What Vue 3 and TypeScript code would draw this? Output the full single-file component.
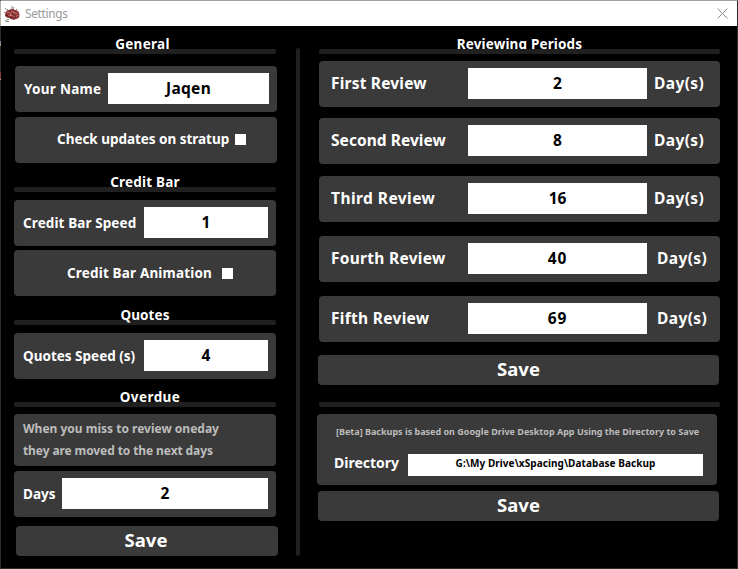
<script setup lang="ts">
import { reactive, ref } from 'vue'

interface Period {
  label: string
  days: string
  track: string
  numTrack: string
  wide: boolean
}

const userName = ref('Jaqen')
const barSpeed = ref('1')
const quoteSpeed = ref('4')
const overdueDays = ref('2')
const directory = ref('G:\\My Drive\\xSpacing\\Database Backup')

const periods = reactive<Period[]>([
  { label: 'First Review', days: '2', track: '0.2px', numTrack: '0', wide: false },
  { label: 'Second Review', days: '8', track: '0.05px', numTrack: '0', wide: false },
  { label: 'Third Review', days: '16', track: '0.45px', numTrack: '0', wide: false },
  { label: 'Fourth Review', days: '40', track: '0.28px', numTrack: '1px', wide: true },
  { label: 'Fifth Review', days: '69', track: '0.3px', numTrack: '1px', wide: true },
])
</script>

<template>
  <div class="window">
    <header class="titlebar">
      <svg class="logo" viewBox="0 0 16 16" width="16" height="16">
        <path d="M1 2.500l3 1.500M8 0v3M10 1l-1 2M13 3l-1 1M0 6l2 1M1 15l4-2M2 15.500h3" stroke="#8b8b8b" stroke-width="1" fill="none" />
        <path d="M1 9C1 6 3 4 5 4c2-1.500 5-1.500 6 0 3 0 4.500 2.500 4.500 5 0 3-2 4-4 4-1 1.500-2 1-3 .5-2 0-2-1-3-1.500C3 12 1 11 1 9z" fill="#8e3538" />
        <path d="M3 7c2-2 3 1 5-2M9 5c0 3 3 1 4 3M4 10c2-2 4 1 6-1M10 11c1-1 3 0 4-2M6 7l1 2" stroke="#d98683" stroke-width=".9" fill="none" />
        <path d="M2 9l3 1.500M8 8l3 2M5 5l2 1M11 12l1-2M6 12l2-1" stroke="#42191d" stroke-width=".9" fill="none" />
      </svg>
      <span class="title">Settings</span>
      <svg class="close" viewBox="0 0 11 11" width="11" height="11">
        <path d="M.5.5l10 10M10.500.5l-10 10" stroke="#8c8c8c" stroke-width="1" fill="none" />
      </svg>
    </header>

    <main class="body">
      <section class="left">
        <h2 class="heading general">General</h2>
        <div class="rule"></div>
        <div class="card name-card">
          <label class="name-label">Your Name</label>
          <input v-model="userName" class="field name-field" />
        </div>
        <div class="card check updates">
          <span>Check updates on stratup</span><i class="box"></i>
        </div>

        <h2 class="heading credit">Credit Bar</h2>
        <div class="rule"></div>
        <div class="card speed">
          <label class="speed-label">Credit Bar Speed</label>
          <input v-model="barSpeed" class="field" />
        </div>
        <div class="card check animation">
          <span>Credit Bar Animation</span><i class="box"></i>
        </div>

        <h2 class="heading quotes">Quotes</h2>
        <div class="rule under"></div>
        <div class="card speed">
          <label>Quotes Speed (s)</label>
          <input v-model="quoteSpeed" class="field" />
        </div>

        <h2 class="heading overdue">Overdue</h2>
        <div class="rule"></div>
        <div class="card note">
          <p>When you miss to review oneday</p>
          <p class="second">they are moved to the next days</p>
        </div>
        <div class="card days">
          <label>Days</label>
          <input v-model="overdueDays" class="field" />
        </div>
        <button class="save">Save</button>
      </section>

      <div class="divider"></div>

      <section class="right">
        <h2 class="heading reviewing">Reviewing Periods</h2>
        <div class="rule"></div>
        <div class="periods">
          <div v-for="p in periods" :key="p.label" class="card period" :class="{ wide: p.wide }">
            <label :style="{ letterSpacing: p.track }">{{ p.label }}</label>
            <input v-model="p.days" class="field" :style="{ letterSpacing: p.numTrack }" />
            <span class="unit">Day(s)</span>
          </div>
        </div>
        <button class="save">Save</button>
        <div class="rule backup-rule"></div>
        <div class="card backup">
          <p class="hint">[Beta] Backups is based on Google Drive Desktop App Using the Directory to Save</p>
          <div class="dir">
            <label>Directory</label>
            <input v-model="directory" class="field dir-field" />
          </div>
        </div>
        <button class="save last">Save</button>
      </section>
    </main>
  </div>
</template>

<style>
body {
  background: #000;
}
</style>

<style scoped>
* {
  box-sizing: border-box;
}
.window {
  width: 738px;
  height: 569px;
  overflow: hidden;
  border: 1px solid #2b2b2b;
  border-top-color: #a2a1a2;
  border-left-color: transparent;
  background:
    linear-gradient(#b5b0a8 0 26px, #2b2b2b 26px 41px, #6b8ca8 41px 44px, #a59a80 44px 46px, #2b2b2b 46px 72px, #8a3a3a 72px 79px, #b0b0b0 79px 80px, #2b2b2b 80px) 0 0 / 1px 100% no-repeat border-box,
    #000;
  color: #fff;
  font: 700 13.5px/17px 'Noto Sans', sans-serif;
}
.titlebar {
  display: flex;
  align-items: center;
  height: 25px;
  padding: 0 9px 0 3px;
  background: #fff;
}
.title {
  flex: 1;
  margin-left: 5px;
  color: #999;
  font-weight: 400;
  font-size: 11.8px;
  letter-spacing: -0.3px;
}
.body {
  display: flex;
  padding: 9px 0 0 13px;
}
.left {
  width: 262px;
}
.heading {
  height: 14px;
  margin: 0;
  font-size: 13.5px;
  line-height: 19px;
  text-align: center;
}
.general {
  padding-right: 5px;
  letter-spacing: 0.3px;
}
.credit {
  margin-top: 10px;
  letter-spacing: 0.2px;
}
.quotes {
  position: relative;
  z-index: 1;
  margin-top: 10px;
  letter-spacing: 0.1px;
}
.overdue {
  margin-top: 9px;
  padding-left: 10px;
  letter-spacing: 0.45px;
}
.rule {
  position: relative;
  height: 5px;
  border-radius: 2px;
  background: #202020;
}
.card {
  display: flex;
  align-items: center;
  height: 46px;
  border-radius: 4px;
  background: #3a3a3a;
}
.field {
  height: 31px;
  min-width: 0;
  margin: 0;
  padding: 0 0 1px;
  border: 0;
  border-radius: 0;
  outline: 0;
  background: #fff;
  color: #000;
  font: 700 15.5px 'Noto Sans', sans-serif;
  text-align: center;
}
.name-card {
  width: 262px;
  margin: 12px 0 0 1px;
  padding: 0 8px 1px 9px;
}
.name-label {
  width: 84px;
  padding-top: 2px;
  letter-spacing: 0.28px;
}
.name-field {
  flex: 1;
  letter-spacing: 0.3px;
}
.updates {
  width: 262px;
  margin: 5px 0 0 1px;
  padding: 0 0 1px 42px;
  letter-spacing: -0.03px;
}
.updates .box {
  margin-left: 6px;
}
.box {
  width: 11px;
  height: 11px;
  background: #fff;
}
.speed {
  margin-top: 8px;
  padding: 0 8px 1px 9px;
}
.speed label {
  width: 121px;
  padding-top: 2px;
}
.speed .speed-label {
  letter-spacing: 0.1px;
}
.speed .field,
.days .field {
  flex: 1;
}
.animation {
  margin-top: 4px;
  padding-left: 53px;
  letter-spacing: 0.17px;
}
.animation .box {
  margin-left: 10px;
}
.note {
  flex-direction: column;
  align-items: flex-start;
  height: 52px;
  margin-top: 7px;
  padding: 4px 9px;
  color: #bdbdbd;
  font-size: 12px;
  line-height: 22px;
}
.note p {
  margin: 0;
}
.note .second {
  letter-spacing: -0.1px;
}
.days {
  margin-top: 5px;
  padding: 0 8px 1px 9px;
}
.days label {
  width: 39px;
  padding-top: 2px;
}
.save {
  display: block;
  width: 401px;
  height: 30px;
  margin: 0;
  padding: 0 0 3px;
  border: 0;
  border-radius: 4px;
  background: #3a3a3a;
  color: #fff;
  font: 700 18.5px/27px 'Noto Sans', sans-serif;
}
.left .save {
  width: 262px;
  margin: 9px 0 0 2px;
  padding-right: 2px;
}
.divider {
  width: 4px;
  height: 508px;
  margin: 13px 19px 0 20px;
  border-radius: 2px;
  background: #202020;
}
.right {
  width: 401px;
}
.reviewing {
  letter-spacing: 0.15px;
}
.periods {
  display: grid;
  grid-template-rows: 57px 58px 60px 60px 46px;
  margin-top: 7px;
}
.period {
  padding: 0 0 1px 12px;
  font-size: 15.5px;
}
.period label {
  width: 137px;
  padding-bottom: 1px;
}
.period .field {
  width: 179px;
}
.unit {
  margin-left: 7px;
  padding-bottom: 1px;
  letter-spacing: 0.4px;
}
.wide .unit {
  margin-left: 10px;
}
.right .save {
  margin: 13px 0 0 -1px;
}
.backup-rule {
  margin-top: 17px;
}
.backup {
  flex-direction: column;
  align-items: stretch;
  width: 400px;
  height: 71px;
  margin: 7px 0 0 -2px;
  padding: 9px 14px 0 17px;
}
.hint {
  height: 31px;
  margin: 0;
  padding-left: 2px;
  color: #bdbdbd;
  font-size: 9px;
  line-height: 18px;
  white-space: nowrap;
}
.dir {
  display: flex;
  align-items: center;
}
.dir label {
  width: 74px;
  padding-bottom: 5px;
  font-size: 14px;
}
.dir-field {
  flex: 1;
  height: 22px;
  padding-bottom: 4px;
  font-size: 10px;
  letter-spacing: 0.06px;
}
.right .last {
  margin-top: 6px;
}
</style>
